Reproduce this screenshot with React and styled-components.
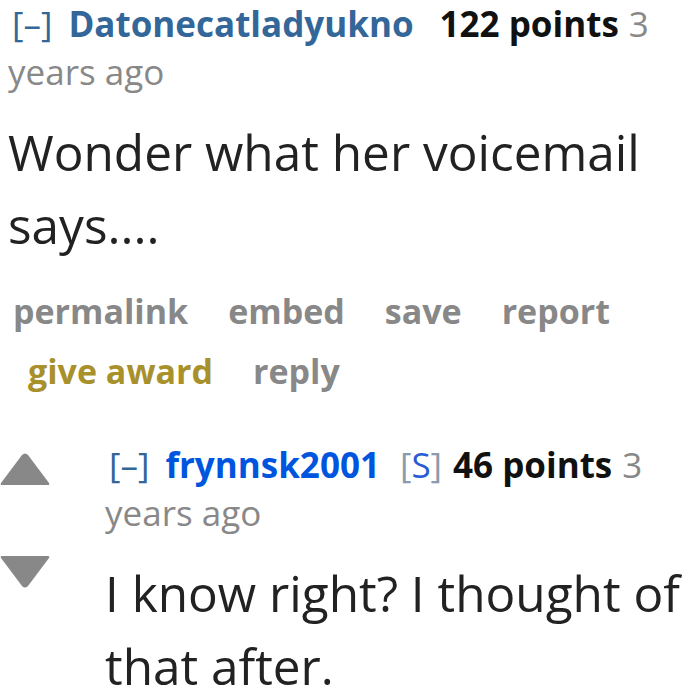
import React from "react";
import styled, { createGlobalStyle } from "styled-components";

const Global = createGlobalStyle`
  html, body { margin: 0; padding: 0; background: #fff; }
  body { font-family: "Open Sans", "Noto Sans", sans-serif; color: #222; }
`;

const Page = styled.div`
  width: 700px;
  height: 700px;
  overflow: hidden;
  background: #fff;
`;

const Comment = styled.div`
  padding-left: 8px;
`;

const Tagline = styled.p`
  margin: 0;
  font-size: 35px;
  line-height: 48px;
  color: #888;
`;

const Expand = styled.span`
  color: #369;
  margin-left: 4px;
  margin-right: 16px;
`;

const Author = styled.span`
  font-weight: 700;
  color: ${(p) => (p.$submitter ? "#0055df" : "#369")};
  margin-right: ${(p) => (p.$submitter ? "20px" : "26px")};
`;

const Flair = styled.span`
  color: #8a9bb0;
  margin-right: 11px;
  b {
    font-weight: 400;
    color: #2a5bd7;
  }
`;

const Score = styled.span`
  font-weight: 700;
  color: #111;
  margin-right: 10px;
`;

const Body = styled.div`
  font-size: 49.5px;
  line-height: 73px;
  color: #222;
  margin-top: 20px;
`;

const Buttons = styled.ul`
  list-style: none;
  margin: 19px 0 0;
  padding: 0 0 0 5px;
  font-size: 34px;
  line-height: 60px;
`;

const Button = styled.li`
  display: inline-block;
  padding: 0 25px 0 15px;
  font-weight: 700;
  color: ${(p) => (p.$gold ? "#a8912b" : "#888")};
  &:first-child {
    padding-left: 0;
  }
`;

const Child = styled.div`
  display: flex;
  margin-top: 40px;
`;

const Midcol = styled.div`
  width: 50px;
  flex: none;
  display: flex;
  flex-direction: column;
  gap: 71px;
  padding-top: 11px;
  margin-right: 55px;
`;

const ArrowSvg = styled.svg`
  display: block;
  width: 50px;
  height: 33px;
`;

const Arrow = ({ down }) => (
  <ArrowSvg viewBox="0 0 50 33">
    <path
      d={
        down
          ? "M2 0 H48 Q50 0 49 2 L28 30 Q25 33 22 30 L1 2 Q0 0 2 0 Z"
          : "M2 33 H48 Q50 33 49 31 L28 3 Q25 0 22 3 L1 31 Q0 33 2 33 Z"
      }
      fill="#888"
    />
  </ArrowSvg>
);

const Entry = styled.div`
  flex: 1;
  min-width: 0;
`;

export default function App() {
  return (
    <Page>
      <Global />
      <Comment>
        <Tagline>
          <Expand>[–]</Expand>
          <Author>Datonecatladyukno</Author>
          <Score>122 points</Score>3 years ago
        </Tagline>
        <Body>Wonder what her voicemail says....</Body>
        <Buttons>
          <Button>permalink</Button>
          <Button>embed</Button>
          <Button>save</Button>
          <Button>report</Button>
          <Button $gold>give award</Button>
          <Button>reply</Button>
        </Buttons>
      </Comment>
      <Child>
        <Midcol>
          <Arrow />
          <Arrow down />
        </Midcol>
        <Entry>
          <Tagline>
            <Expand>[–]</Expand>
            <Author $submitter>frynnsk2001</Author>
            <Flair>
              [<b>S</b>]
            </Flair>
            <Score>46 points</Score>3 years ago
          </Tagline>
          <Body>I know right? I thought of that after.</Body>
        </Entry>
      </Child>
    </Page>
  );
}
